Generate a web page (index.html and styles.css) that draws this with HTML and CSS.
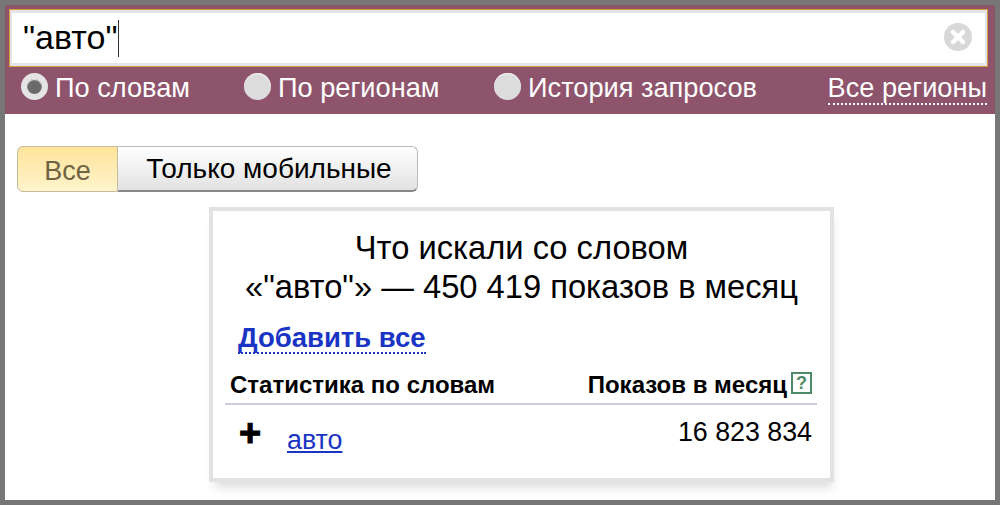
FILE: index.html
```html
<!DOCTYPE html>
<html lang="en">
<head>
  <meta charset="UTF-8">
  <title>Подбор слов</title>
  <link rel="stylesheet" href="styles.css">
</head>
<body>
  <div class="frame">
    <div class="search-bar">
      <div class="search-input">
        <span class="query">"авто"</span><span class="caret"></span>
        <svg class="clear-icon" width="28" height="28" viewBox="0 0 28 28">
          <circle cx="14" cy="14" r="14" fill="#d8d8d8"/>
          <path d="M9 9 L19 19 M19 9 L9 19" stroke="#fff" stroke-width="4.5" stroke-linecap="round"/>
        </svg>
      </div>
      <div class="search-options">
        <label class="option option-words"><span class="radio checked"></span>По словам</label>
        <label class="option option-regions"><span class="radio"></span>По регионам</label>
        <label class="option"><span class="radio"></span>История запросов</label>
        <a class="all-regions">Все регионы</a>
      </div>
    </div>

    <div class="switcher">
      <span class="switch-btn active">Все</span>
      <span class="switch-btn">Только мобильные</span>
    </div>

    <div class="card">
      <h2 class="card-title">Что искали со словом<br>«"авто"» — 450 419 показов в месяц</h2>
      <a class="add-all">Добавить все</a>
      <table class="stats">
        <thead>
          <tr>
            <th>Статистика по словам</th>
            <th class="num">Показов в месяц<span class="help">?</span></th>
          </tr>
        </thead>
        <tbody>
          <tr>
            <td><span class="plus">+</span><a class="word">авто</a></td>
            <td class="num">16 823 834</td>
          </tr>
        </tbody>
      </table>
    </div>
  </div>
</body>
</html>
```

FILE: styles.css
```css
html, body {
  margin: 0;
  height: 100%;
}

body {
  font-family: "Liberation Sans", Arial, sans-serif;
  color: #000;
}

.frame {
  box-sizing: border-box;
  height: 505px;
  border: 5px solid #777;
  background: white;
  overflow: hidden;
}

.search-bar {
  box-sizing: border-box;
  height: 109px;
  padding: 4px 7px 0 4px;
  background: #8e546c;
}

.search-input {
  box-sizing: border-box;
  height: 58px;
  display: flex;
  align-items: center;
  padding: 0 15px 0 13px;
  background: white;
  border: 1px solid #d99a3c;
  box-shadow: inset 0 3px 0 #e2e5e8, inset 2px 0 0 #e2e5e8, inset -2px 0 0 #e2e5e8, inset 0 -3px 0 #e2e5e8;
}

.query {
  font-size: 34px;
  position: relative;
  top: -1px;
}

.caret {
  width: 1px;
  height: 37px;
  background: #333;
  margin-left: 1px;
}

.clear-icon {
  margin-left: auto;
  margin-bottom: 2px;
}

.search-options {
  display: flex;
  align-items: center;
  height: 44px;
  padding-left: 12px;
  font-size: 27.2px;
  color: white;
}

.option {
  display: flex;
  align-items: center;
  position: relative;
  top: -1px;
}

.option-words {
  width: 223px;
}

.option-regions {
  width: 250px;
}

.radio {
  box-sizing: border-box;
  width: 27px;
  height: 27px;
  margin: 0 7px 3px 0;
  border-radius: 50%;
  background: #dcdcdc;
  box-shadow: inset 0 1px 1px #f4f4f4;
}

.radio.checked {
  border: 6px solid #e4e4e4;
  background: #6a6a6a;
}

.all-regions {
  margin: 0 1px 0 auto;
  line-height: 30px;
  border-bottom: 2px dotted white;
}

.switcher {
  display: flex;
  width: 401px;
  height: 46px;
  margin: 32px 0 0 12px;
  font-size: 28px;
}

.switch-btn {
  box-sizing: border-box;
  flex: 1;
  padding: 1px 0 0 3px;
  display: flex;
  align-items: center;
  justify-content: center;
  border: 1px solid #bbb;
  border-bottom: 2px solid #888;
  border-left: 0;
  border-radius: 0 6px 6px 0;
  background: linear-gradient(#fff, #e2e2e2);
}

.switch-btn.active {
  flex: 0 0 101px;
  padding: 4px 0 0;
  border: 1px solid #c4bc9c;
  border-radius: 6px 0 0 6px;
  background: linear-gradient(#ffe39a, #fff4cc);
  color: #6e6444;
  font-size: 27px;
}

.card {
  box-sizing: border-box;
  width: 625px;
  height: 275px;
  margin: 15px 0 0 204px;
  padding: 17px 12px 0;
  border: 4px solid #e2e2e2;
  box-shadow: 2px 9px 10px -4px rgba(0,0,0,0.15);
}

.card-title {
  margin: 0;
  font-size: 32.7px;
  font-weight: normal;
  line-height: 39px;
  text-align: center;
}

.add-all {
  display: inline-block;
  margin: 17px 0 0 13px;
  font-size: 27.5px;
  font-weight: bold;
  line-height: 29px;
  color: #1a35c4;
  border-bottom: 2px dotted #1a35c4;
}

.stats {
  width: 592px;
  margin: 15px 0 0 0;
  border-collapse: collapse;
  font-size: 24px;
}

.stats th {
  padding: 1px 5px 3px;
  height: 30px;
  text-align: left;
  border-bottom: 2px solid #cfcbdc;
}

.stats .num {
  text-align: right;
}

.stats td {
  padding: 12px 5px 0;
  font-size: 26.8px;
  vertical-align: top;
}

.help {
  display: inline-block;
  box-sizing: border-box;
  width: 21px;
  height: 22px;
  margin-left: 4px;
  border: 2px solid #4f8a68;
  font-size: 18px;
  font-weight: bold;
  line-height: 18px;
  text-align: center;
  color: #4f8a68;
  vertical-align: 4px;
}

.plus {
  display: inline-block;
  width: 57px;
  padding-left: 9px;
  box-sizing: border-box;
  font-size: 38px;
  font-weight: 900;
  line-height: 28px;
  vertical-align: top;
  position: relative;
  top: 2px;
  -webkit-text-stroke: 1px #000;
}

.word {
  position: relative;
  top: 8px;
  color: #1a35c4;
  text-decoration: underline;
}
```
